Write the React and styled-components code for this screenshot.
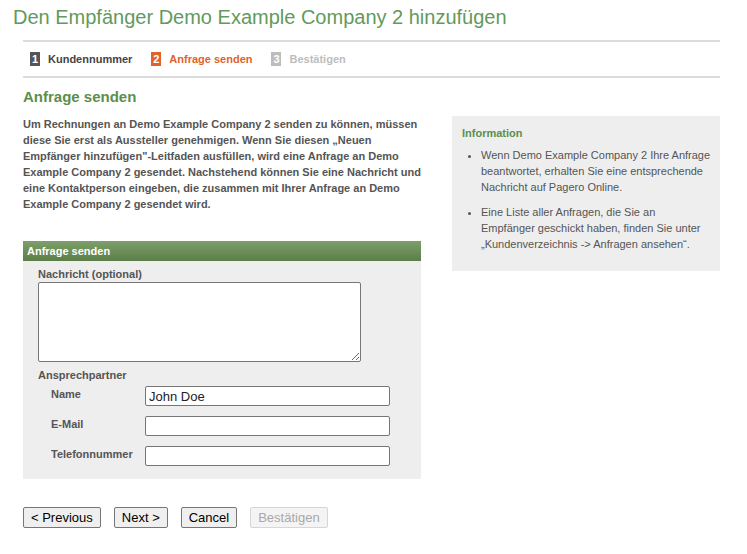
import React from 'react';
import styled, { createGlobalStyle } from 'styled-components';

const GlobalStyle = createGlobalStyle`
  body {
    margin: 0;
    background: #fff;
    font-family: 'Liberation Sans', Arial, sans-serif;
  }
`;

const steps = [
  { n: 1, label: 'Kundennummer', state: 'done' },
  { n: 2, label: 'Anfrage senden', state: 'active' },
  { n: 3, label: 'Bestätigen', state: 'todo' },
];

const stepColors = {
  done: { badge: '#555555', text: '#444444' },
  active: { badge: '#e0632b', text: '#e0632b' },
  todo: { badge: '#bdbdbd', text: '#bdbdbd' },
};

const App = () => {
  return (
    <Page>
      <GlobalStyle />
      <Title>Den Empfänger Demo Example Company 2 hinzufügen</Title>
      <Content>
        <StepBar>
          {steps.map((s) => (
            <Step key={s.n} state={s.state}>
              <Badge state={s.state}>{s.n}</Badge>
              {s.label}
            </Step>
          ))}
        </StepBar>
        <Heading>Anfrage senden</Heading>
        <Columns>
          <Main>
            <Intro>
              Um Rechnungen an Demo Example Company 2 senden zu können, müssen
              diese Sie erst als Aussteller genehmigen. Wenn Sie diesen „Neuen
              Empfänger hinzufügen"-Leitfaden ausfüllen, wird eine Anfrage an Demo
              Example Company 2 gesendet. Nachstehend können Sie eine Nachricht und
              eine Kontaktperson eingeben, die zusammen mit Ihrer Anfrage an Demo
              Example Company 2 gesendet wird.
            </Intro>
            <Panel>
              <PanelHeader>Anfrage senden</PanelHeader>
              <PanelBody>
                <Label>Nachricht (optional)</Label>
                <Message />
                <Label>Ansprechpartner</Label>
                <Field>
                  <FieldLabel>Name</FieldLabel>
                  <Input defaultValue='John Doe' />
                </Field>
                <Field>
                  <FieldLabel>E-Mail</FieldLabel>
                  <Input />
                </Field>
                <Field>
                  <FieldLabel>Telefonnummer</FieldLabel>
                  <Input />
                </Field>
              </PanelBody>
            </Panel>
            <Buttons>
              <Button>&lt; Previous</Button>
              <Button>Next &gt;</Button>
              <Button>Cancel</Button>
              <Button disabled>Bestätigen</Button>
            </Buttons>
          </Main>
          <InfoBox>
            <InfoTitle>Information</InfoTitle>
            <InfoList>
              <li>
                Wenn Demo Example Company 2 Ihre Anfrage beantwortet, erhalten Sie
                eine entsprechende Nachricht auf Pagero Online.
              </li>
              <li>
                Eine Liste aller Anfragen, die Sie an Empfänger geschickt haben,
                finden Sie unter „Kundenverzeichnis -&gt; Anfragen ansehen“.
              </li>
            </InfoList>
          </InfoBox>
        </Columns>
      </Content>
    </Page>
  );
};

const Page = styled.div`
  padding: 5px 27px 20px 13px;
  width: 747px;
  box-sizing: border-box;
`;

const Title = styled.h1`
  margin: 0;
  font-size: 20px;
  font-weight: normal;
  line-height: 24px;
  color: #629a5c;
`;

const Content = styled.div`
  margin-left: 10px;
  margin-top: 11px;
`;

const StepBar = styled.div`
  display: flex;
  align-items: center;
  gap: 19px;
  height: 34px;
  padding-left: 7px;
  border-top: 2px solid #dcdcdc;
  border-bottom: 2px solid #dcdcdc;
`;

const Step = styled.div`
  display: flex;
  align-items: center;
  gap: 8px;
  font-size: 11px;
  font-weight: bold;
  color: ${({ state }) => stepColors[state].text};
`;

const Badge = styled.span`
  display: inline-flex;
  align-items: center;
  justify-content: center;
  width: 10px;
  height: 14px;
  background: ${({ state }) => stepColors[state].badge};
  color: #fff;
  font-size: 11px;
  font-weight: bold;
`;

const Heading = styled.h2`
  margin: 10px 0 0;
  font-size: 15px;
  line-height: 18px;
  color: #5b8f4c;
`;

const Columns = styled.div`
  display: flex;
  gap: 31px;
  margin-top: 10px;
`;

const Main = styled.div`
  width: 398px;
`;

const Intro = styled.p`
  margin: 0;
  font-size: 11px;
  font-weight: bold;
  line-height: 16px;
  color: #555;
`;

const Panel = styled.div`
  margin-top: 29px;
  background: #eeeeee;
`;

const PanelHeader = styled.div`
  height: 20px;
  line-height: 20px;
  padding-left: 4px;
  background: linear-gradient(#7d9f69, #5b7e48);
  color: #fff;
  font-size: 11px;
  font-weight: bold;
`;

const PanelBody = styled.div`
  padding: 6px 15px 13px;
`;

const Label = styled.div`
  font-size: 11px;
  font-weight: bold;
  line-height: 14px;
  color: #555;
`;

const Message = styled.textarea`
  display: block;
  box-sizing: border-box;
  width: 323px;
  height: 80px;
  margin: 1px 0 6px;
  border: 1px solid #767676;
  border-radius: 2px;
  background: #fff;
`;

const Field = styled.div`
  display: flex;
  align-items: flex-start;
  margin-top: 4px;
  padding-left: 13px;
  & + & {
    margin-top: 10px;
  }
`;

const FieldLabel = styled.span`
  width: 94px;
  padding-top: 2px;
  font-size: 11px;
  font-weight: bold;
  color: #555;
`;

const Input = styled.input`
  box-sizing: border-box;
  width: 245px;
  height: 20px;
  padding: 0 3px;
  border: 1px solid #767676;
  border-radius: 2px;
  font-family: 'Liberation Sans', Arial, sans-serif;
  font-size: 13px;
  color: #222;
  background: #fff;
`;

const Buttons = styled.div`
  display: flex;
  gap: 13px;
  margin-top: 28px;
`;

const Button = styled.button`
  height: 21px;
  padding: 0 7px;
  border: 1px solid #767676;
  border-radius: 2px;
  background: #efefef;
  color: #000;
  font-family: 'Liberation Sans', Arial, sans-serif;
  font-size: 13px;
  &:disabled {
    border-color: #d6d6d6;
    background: #f4f4f4;
    color: #a8a8a8;
  }
`;

const InfoBox = styled.div`
  width: 268px;
  height: 155px;
  box-sizing: border-box;
  padding: 11px 9px 11px 10px;
  background: #eeeeee;
`;

const InfoTitle = styled.div`
  font-size: 11px;
  font-weight: bold;
  color: #5b8f4c;
`;

const InfoList = styled.ul`
  margin: 8px 0 0;
  padding-left: 19px;
  font-size: 11px;
  line-height: 16px;
  color: #555;
  li + li {
    margin-top: 9px;
  }
`;

export default App;
